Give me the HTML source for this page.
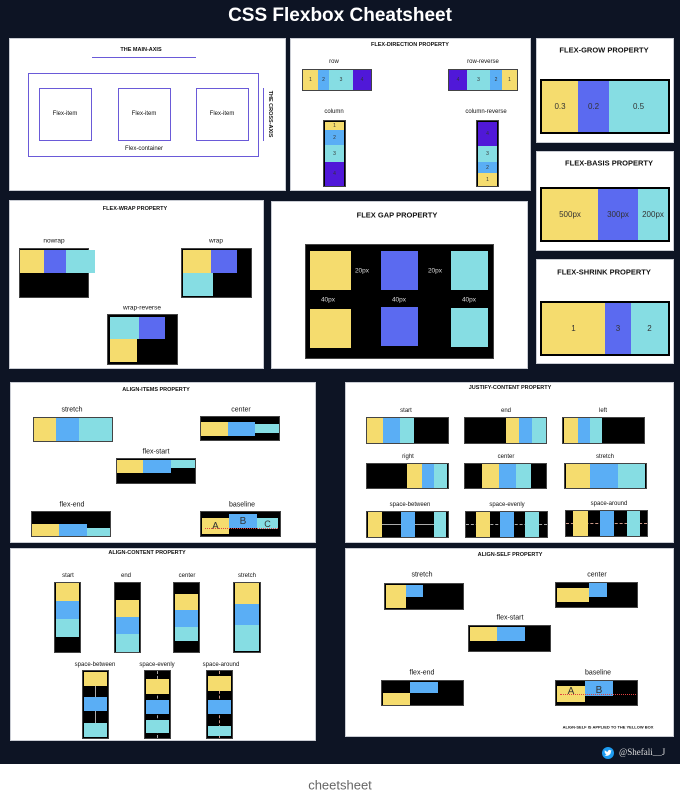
<!DOCTYPE html>
<html><head><meta charset="utf-8"><style>
*{margin:0;padding:0;box-sizing:border-box}
body{width:680px;height:795px;background:#fff;position:relative;overflow:hidden;font-family:"Liberation Sans",sans-serif}
.a{position:absolute}
.bg{left:0;top:0;width:680px;height:764px;background:#0d1424}
.p{position:absolute;background:#fff;border:1px solid #c9ccd3}
.k{position:absolute;background:#000;border:1px solid #444}
.t{position:absolute;transform:translate(-50%,-50%);white-space:nowrap;font-weight:bold;color:#111}
.s6{font-size:5.5px}.s7{font-size:7px;font-weight:normal}.s8{font-size:7.5px}
.Y{background:#f5dc6e}.B{background:#5b6af0}.L{background:#5aaef5}.C{background:#86dde3}.P{background:#5018d8}
.n{display:flex;align-items:center;justify-content:center;font-size:8px;color:#333}
</style></head><body>
<div class="a bg"></div>
<div class="t" style="left:340px;top:16px;color:#fff;font-size:19px">CSS Flexbox Cheatsheet</div>

<!-- Panel 1 -->
<div class="p" style="left:9px;top:38px;width:277px;height:153px"></div>
<div class="t s6" style="left:141px;top:50px">THE MAIN-AXIS</div>
<div class="a" style="left:92px;top:57px;width:104px;height:1px;background:#6a5ad8"></div>
<div class="a" style="left:28px;top:73px;width:231px;height:84px;border:1px solid #6a5ad8"></div>
<div class="a" style="left:39px;top:88px;width:53px;height:53px;border:1px solid #6a5ad8"></div>
<div class="a" style="left:118px;top:88px;width:53px;height:53px;border:1px solid #6a5ad8"></div>
<div class="a" style="left:196px;top:88px;width:53px;height:53px;border:1px solid #6a5ad8"></div>
<div class="t s7" style="left:65px;top:114px;font-size:6px">Flex-item</div>
<div class="t s7" style="left:144px;top:114px;font-size:6px">Flex-item</div>
<div class="t s7" style="left:222px;top:114px;font-size:6px">Flex-item</div>
<div class="t s7" style="left:144px;top:149px;font-size:6px">Flex-container</div>
<div class="a" style="left:263px;top:88px;width:1px;height:53px;background:#6a5ad8"></div>
<div class="t s6" style="left:270px;top:114px;transform:translate(-50%,-50%) rotate(90deg)">THE CROSS-AXIS</div>

<!-- Panel 2 -->
<div class="p" style="left:290px;top:38px;width:241px;height:153px"></div>
<div class="t s6" style="left:410px;top:45px">FLEX-DIRECTION PROPERTY</div>
<div class="t s7" style="left:334px;top:62px;font-size:6px">row</div>
<div class="k" style="left:302px;top:69px;width:70px;height:22px"></div>
<div class="a Y n" style="left:303px;top:70px;width:15px;height:20px;font-size:5px">1</div>
<div class="a L n" style="left:318px;top:70px;width:11px;height:20px;font-size:5px">2</div>
<div class="a C n" style="left:329px;top:70px;width:24px;height:20px;font-size:5px">3</div>
<div class="a P n" style="left:353px;top:70px;width:18px;height:20px;font-size:5px">4</div>
<div class="t s7" style="left:483px;top:62px;font-size:6px">row-reverse</div>
<div class="k" style="left:448px;top:69px;width:70px;height:22px"></div>
<div class="a P n" style="left:449px;top:70px;width:18px;height:20px;font-size:5px">4</div>
<div class="a C n" style="left:467px;top:70px;width:23px;height:20px;font-size:5px">3</div>
<div class="a L n" style="left:490px;top:70px;width:12px;height:20px;font-size:5px">2</div>
<div class="a Y n" style="left:502px;top:70px;width:15px;height:20px;font-size:5px">1</div>
<div class="t s7" style="left:334px;top:112px;font-size:6px">column</div>
<div class="k" style="left:323px;top:120px;width:23px;height:67px"></div>
<div class="a Y n" style="left:325px;top:122px;width:19px;height:8px;font-size:5px">1</div>
<div class="a L n" style="left:325px;top:130px;width:19px;height:15px;font-size:5px">2</div>
<div class="a C n" style="left:325px;top:145px;width:19px;height:17px;font-size:5px">3</div>
<div class="a P n" style="left:325px;top:162px;width:19px;height:24px;font-size:5px">4</div>
<div class="t s7" style="left:486px;top:112px;font-size:6px">column-reverse</div>
<div class="k" style="left:476px;top:120px;width:23px;height:67px"></div>
<div class="a P n" style="left:478px;top:122px;width:19px;height:24px;font-size:5px">4</div>
<div class="a C n" style="left:478px;top:146px;width:19px;height:16px;font-size:5px">3</div>
<div class="a L n" style="left:478px;top:162px;width:19px;height:11px;font-size:5px">2</div>
<div class="a Y n" style="left:478px;top:173px;width:19px;height:13px;font-size:5px">1</div>

<!-- Grow / basis / shrink -->
<div class="p" style="left:536px;top:38px;width:138px;height:105px"></div>
<div class="t s8" style="left:604px;top:50px">FLEX-GROW PROPERTY</div>
<div class="k" style="left:540px;top:79px;width:130px;height:55px;border:2px solid #000"></div>
<div class="a Y n" style="left:542px;top:81px;width:36px;height:51px">0.3</div>
<div class="a B n" style="left:578px;top:81px;width:31px;height:51px">0.2</div>
<div class="a C n" style="left:609px;top:81px;width:59px;height:51px">0.5</div>

<div class="p" style="left:536px;top:151px;width:138px;height:100px"></div>
<div class="t s8" style="left:609px;top:163px">FLEX-BASIS PROPERTY</div>
<div class="k" style="left:540px;top:187px;width:130px;height:55px;border:2px solid #000"></div>
<div class="a Y n" style="left:542px;top:189px;width:56px;height:51px">500px</div>
<div class="a B n" style="left:598px;top:189px;width:40px;height:51px">300px</div>
<div class="a C n" style="left:638px;top:189px;width:30px;height:51px">200px</div>

<div class="p" style="left:536px;top:259px;width:138px;height:105px"></div>
<div class="t s8" style="left:604px;top:272px">FLEX-SHRINK PROPERTY</div>
<div class="k" style="left:540px;top:301px;width:130px;height:55px;border:2px solid #000"></div>
<div class="a Y n" style="left:542px;top:303px;width:63px;height:51px">1</div>
<div class="a B n" style="left:605px;top:303px;width:26px;height:51px">3</div>
<div class="a C n" style="left:631px;top:303px;width:37px;height:51px">2</div>

<!-- Wrap -->
<div class="p" style="left:9px;top:200px;width:255px;height:169px"></div>
<div class="t s6" style="left:135px;top:209px">FLEX-WRAP PROPERTY</div>
<div class="t s7" style="left:54px;top:241px;font-size:6.5px">nowrap</div>
<div class="k" style="left:19px;top:248px;width:70px;height:50px"></div>
<div class="a Y" style="left:20px;top:250px;width:24px;height:23px"></div>
<div class="a B" style="left:44px;top:250px;width:22px;height:23px"></div>
<div class="a C" style="left:66px;top:250px;width:29px;height:23px"></div>
<div class="t s7" style="left:216px;top:241px;font-size:6.5px">wrap</div>
<div class="k" style="left:181px;top:248px;width:71px;height:50px"></div>
<div class="a Y" style="left:183px;top:250px;width:28px;height:23px"></div>
<div class="a B" style="left:211px;top:250px;width:26px;height:23px"></div>
<div class="a C" style="left:183px;top:273px;width:30px;height:23px"></div>
<div class="t s7" style="left:142px;top:308px;font-size:6.5px">wrap-reverse</div>
<div class="k" style="left:107px;top:314px;width:71px;height:51px"></div>
<div class="a C" style="left:110px;top:317px;width:29px;height:22px"></div>
<div class="a B" style="left:139px;top:317px;width:26px;height:22px"></div>
<div class="a Y" style="left:110px;top:339px;width:27px;height:23px"></div>

<!-- Gap -->
<div class="p" style="left:271px;top:201px;width:257px;height:168px"></div>
<div class="t s8" style="left:397px;top:215px">FLEX GAP PROPERTY</div>
<div class="k" style="left:305px;top:244px;width:189px;height:115px"></div>
<div class="a Y" style="left:310px;top:251px;width:41px;height:39px"></div>
<div class="a B" style="left:381px;top:251px;width:37px;height:39px"></div>
<div class="a C" style="left:451px;top:251px;width:37px;height:39px"></div>
<div class="a Y" style="left:310px;top:309px;width:41px;height:39px"></div>
<div class="a B" style="left:381px;top:307px;width:37px;height:39px"></div>
<div class="a C" style="left:451px;top:308px;width:37px;height:39px"></div>
<div class="t" style="left:362px;top:271px;font-size:6.5px;color:#ddd;font-weight:normal">20px</div>
<div class="t" style="left:435px;top:271px;font-size:6.5px;color:#ddd;font-weight:normal">20px</div>
<div class="t" style="left:328px;top:300px;font-size:6.5px;color:#ddd;font-weight:normal">40px</div>
<div class="t" style="left:399px;top:300px;font-size:6.5px;color:#ddd;font-weight:normal">40px</div>
<div class="t" style="left:469px;top:300px;font-size:6.5px;color:#ddd;font-weight:normal">40px</div>

<!-- Align-items -->
<div class="p" style="left:10px;top:382px;width:306px;height:161px"></div>
<div class="t s6" style="left:156px;top:390px">ALIGN-ITEMS PROPERTY</div>
<div class="t s7" style="left:72px;top:410px">stretch</div>
<div class="k" style="left:33px;top:417px;width:80px;height:25px"></div>
<div class="a Y" style="left:34px;top:418px;width:22px;height:23px"></div>
<div class="a L" style="left:56px;top:418px;width:23px;height:23px"></div>
<div class="a C" style="left:79px;top:418px;width:33px;height:23px"></div>
<div class="t s7" style="left:241px;top:410px">center</div>
<div class="k" style="left:200px;top:416px;width:80px;height:25px"></div>
<div class="a Y" style="left:201px;top:422px;width:27px;height:14px"></div>
<div class="a L" style="left:228px;top:422px;width:27px;height:14px"></div>
<div class="a C" style="left:255px;top:424px;width:24px;height:9px"></div>
<div class="t s7" style="left:156px;top:452px">flex-start</div>
<div class="k" style="left:116px;top:458px;width:80px;height:26px"></div>
<div class="a Y" style="left:117px;top:460px;width:26px;height:13px"></div>
<div class="a L" style="left:143px;top:460px;width:28px;height:13px"></div>
<div class="a C" style="left:171px;top:460px;width:24px;height:8px"></div>
<div class="t s7" style="left:72px;top:505px">flex-end</div>
<div class="k" style="left:31px;top:511px;width:80px;height:26px"></div>
<div class="a Y" style="left:32px;top:524px;width:27px;height:12px"></div>
<div class="a L" style="left:59px;top:524px;width:28px;height:12px"></div>
<div class="a C" style="left:87px;top:528px;width:23px;height:8px"></div>
<div class="t s7" style="left:242px;top:505px">baseline</div>
<div class="k" style="left:200px;top:511px;width:81px;height:26px"></div>
<div class="a Y n" style="left:202px;top:518px;width:27px;height:16px;font-size:10px">A</div>
<div class="a L n" style="left:229px;top:514px;width:28px;height:14px;font-size:10px">B</div>
<div class="a C n" style="left:257px;top:518px;width:21px;height:11px;font-size:9px">C</div>
<div class="a" style="left:205px;top:528px;width:73px;border-top:1px dotted #e04040"></div>

<!-- Justify-content -->
<div class="p" style="left:345px;top:382px;width:329px;height:161px"></div>
<div class="t s6" style="left:510px;top:388px">JUSTIFY-CONTENT PROPERTY</div>
<div class="t s7" style="left:406px;top:411px;font-size:6px">start</div>
<div class="t s7" style="left:506px;top:411px;font-size:6px">end</div>
<div class="t s7" style="left:603px;top:411px;font-size:6px">left</div>
<div class="k" style="left:366px;top:417px;width:83px;height:27px"></div>
<div class="a Y" style="left:367px;top:418px;width:16px;height:25px"></div><div class="a L" style="left:383px;top:418px;width:17px;height:25px"></div><div class="a C" style="left:400px;top:418px;width:14px;height:25px"></div>
<div class="k" style="left:464px;top:417px;width:83px;height:27px"></div>
<div class="a Y" style="left:506px;top:418px;width:13px;height:25px"></div><div class="a L" style="left:519px;top:418px;width:13px;height:25px"></div><div class="a C" style="left:532px;top:418px;width:14px;height:25px"></div>
<div class="k" style="left:562px;top:417px;width:83px;height:27px"></div>
<div class="a Y" style="left:564px;top:418px;width:14px;height:25px"></div><div class="a L" style="left:578px;top:418px;width:12px;height:25px"></div><div class="a C" style="left:590px;top:418px;width:12px;height:25px"></div>
<div class="t s7" style="left:408px;top:457px;font-size:6px">right</div>
<div class="t s7" style="left:506px;top:457px;font-size:6px">center</div>
<div class="t s7" style="left:605px;top:457px;font-size:6px">stretch</div>
<div class="k" style="left:366px;top:463px;width:83px;height:26px"></div>
<div class="a Y" style="left:407px;top:464px;width:15px;height:24px"></div><div class="a L" style="left:422px;top:464px;width:12px;height:24px"></div><div class="a C" style="left:434px;top:464px;width:13px;height:24px"></div>
<div class="k" style="left:464px;top:463px;width:83px;height:26px"></div>
<div class="a Y" style="left:482px;top:464px;width:17px;height:24px"></div><div class="a L" style="left:499px;top:464px;width:17px;height:24px"></div><div class="a C" style="left:516px;top:464px;width:15px;height:24px"></div>
<div class="k" style="left:564px;top:463px;width:83px;height:26px"></div>
<div class="a Y" style="left:566px;top:464px;width:24px;height:24px"></div><div class="a L" style="left:590px;top:464px;width:28px;height:24px"></div><div class="a C" style="left:618px;top:464px;width:27px;height:24px"></div>
<div class="t s7" style="left:410px;top:505px;font-size:6px">space-between</div>
<div class="t s7" style="left:507px;top:505px;font-size:6px">space-evenly</div>
<div class="t s7" style="left:609px;top:504px;font-size:6px">space-around</div>
<div class="k" style="left:366px;top:511px;width:83px;height:27px"></div>
<div class="a" style="left:382px;top:524px;width:52px;border-top:1px solid #aaa"></div>
<div class="a Y" style="left:368px;top:512px;width:14px;height:25px"></div><div class="a L" style="left:401px;top:512px;width:14px;height:25px"></div><div class="a C" style="left:434px;top:512px;width:12px;height:25px"></div>
<div class="k" style="left:465px;top:511px;width:83px;height:27px"></div>
<div class="a" style="left:466px;top:524px;width:81px;border-top:1px dashed #aaa"></div>
<div class="a Y" style="left:476px;top:512px;width:14px;height:25px"></div><div class="a L" style="left:500px;top:512px;width:14px;height:25px"></div><div class="a C" style="left:525px;top:512px;width:14px;height:25px"></div>
<div class="k" style="left:565px;top:510px;width:83px;height:27px"></div>
<div class="a" style="left:566px;top:523px;width:81px;border-top:1px dashed #c98"></div>
<div class="a Y" style="left:573px;top:511px;width:15px;height:25px"></div><div class="a L" style="left:600px;top:511px;width:14px;height:25px"></div><div class="a C" style="left:627px;top:511px;width:13px;height:25px"></div>

<!-- Align-content -->
<div class="p" style="left:10px;top:548px;width:306px;height:193px"></div>
<div class="t s6" style="left:147px;top:553px">ALIGN-CONTENT PROPERTY</div>
<div class="t s7" style="left:68px;top:576px;font-size:6px">start</div>
<div class="t s7" style="left:126px;top:576px;font-size:6px">end</div>
<div class="t s7" style="left:187px;top:576px;font-size:6px">center</div>
<div class="t s7" style="left:247px;top:576px;font-size:6px">stretch</div>
<div class="k" style="left:54px;top:582px;width:27px;height:71px"></div>
<div class="a Y" style="left:56px;top:583px;width:23px;height:18px"></div><div class="a L" style="left:56px;top:601px;width:23px;height:18px"></div><div class="a C" style="left:56px;top:619px;width:23px;height:18px"></div>
<div class="k" style="left:114px;top:582px;width:27px;height:71px"></div>
<div class="a Y" style="left:116px;top:600px;width:23px;height:17px"></div><div class="a L" style="left:116px;top:617px;width:23px;height:17px"></div><div class="a C" style="left:116px;top:634px;width:23px;height:18px"></div>
<div class="k" style="left:173px;top:582px;width:27px;height:71px"></div>
<div class="a Y" style="left:175px;top:594px;width:23px;height:16px"></div><div class="a L" style="left:175px;top:610px;width:23px;height:17px"></div><div class="a C" style="left:175px;top:627px;width:23px;height:14px"></div>
<div class="k" style="left:233px;top:582px;width:28px;height:71px"></div>
<div class="a Y" style="left:235px;top:583px;width:24px;height:21px"></div><div class="a L" style="left:235px;top:604px;width:24px;height:21px"></div><div class="a C" style="left:235px;top:625px;width:24px;height:26px"></div>
<div class="t s7" style="left:95px;top:665px;font-size:6px">space-between</div>
<div class="t s7" style="left:157px;top:665px;font-size:6px">space-evenly</div>
<div class="t s7" style="left:221px;top:665px;font-size:6px">space-around</div>
<div class="k" style="left:82px;top:670px;width:27px;height:69px"></div>
<div class="a" style="left:95px;top:672px;height:64px;border-left:1px solid #aaa"></div>
<div class="a Y" style="left:84px;top:672px;width:23px;height:14px"></div><div class="a L" style="left:84px;top:697px;width:23px;height:14px"></div><div class="a C" style="left:84px;top:723px;width:23px;height:14px"></div>
<div class="k" style="left:144px;top:670px;width:27px;height:69px"></div>
<div class="a" style="left:157px;top:671px;height:67px;border-left:1px dashed #aaa"></div>
<div class="a Y" style="left:146px;top:679px;width:23px;height:15px"></div><div class="a L" style="left:146px;top:700px;width:23px;height:14px"></div><div class="a C" style="left:146px;top:720px;width:23px;height:13px"></div>
<div class="k" style="left:206px;top:670px;width:27px;height:69px"></div>
<div class="a" style="left:219px;top:671px;height:67px;border-left:1px dashed #c98"></div>
<div class="a Y" style="left:208px;top:676px;width:23px;height:15px"></div><div class="a L" style="left:208px;top:700px;width:23px;height:14px"></div><div class="a C" style="left:208px;top:726px;width:23px;height:10px"></div>

<!-- Align-self -->
<div class="p" style="left:345px;top:548px;width:329px;height:189px"></div>
<div class="t s6" style="left:510px;top:555px">ALIGN-SELF PROPERTY</div>
<div class="t s7" style="left:422px;top:575px">stretch</div>
<div class="k" style="left:384px;top:583px;width:80px;height:27px"></div>
<div class="a Y" style="left:386px;top:585px;width:20px;height:23px"></div><div class="a L" style="left:406px;top:585px;width:17px;height:12px"></div>
<div class="t s7" style="left:597px;top:575px">center</div>
<div class="k" style="left:555px;top:582px;width:83px;height:26px"></div>
<div class="a Y" style="left:557px;top:588px;width:32px;height:14px"></div><div class="a L" style="left:589px;top:583px;width:18px;height:14px"></div>
<div class="t s7" style="left:510px;top:618px">flex-start</div>
<div class="k" style="left:468px;top:625px;width:83px;height:27px"></div>
<div class="a Y" style="left:470px;top:627px;width:27px;height:14px"></div><div class="a L" style="left:497px;top:627px;width:28px;height:14px"></div>
<div class="t s7" style="left:422px;top:673px">flex-end</div>
<div class="k" style="left:381px;top:680px;width:83px;height:26px"></div>
<div class="a Y" style="left:383px;top:693px;width:27px;height:12px"></div><div class="a L" style="left:410px;top:682px;width:28px;height:11px"></div>
<div class="t s7" style="left:598px;top:673px">baseline</div>
<div class="k" style="left:555px;top:680px;width:83px;height:26px"></div>
<div class="a Y n" style="left:557px;top:686px;width:28px;height:16px;font-size:10px;align-items:flex-start">A</div>
<div class="a L n" style="left:585px;top:681px;width:28px;height:15px;font-size:10px;align-items:flex-end">B</div>
<div class="a" style="left:560px;top:694px;width:76px;border-top:1px dotted #e04040"></div>
<div class="t" style="left:608px;top:727px;font-size:4px">ALIGN-SELF IS APPLIED TO THE YELLOW BOX</div>

<!-- Twitter -->
<div class="a" style="left:602px;top:747px;width:12px;height:12px;border-radius:50%;background:#1d9bf0"></div>
<svg class="a" style="left:604px;top:749px" width="8" height="8" viewBox="0 0 24 24"><path fill="#fff" d="M23 5c-.8.4-1.7.6-2.6.7.9-.6 1.6-1.4 2-2.5-.9.5-1.9.9-2.9 1.1A4.5 4.5 0 0 0 11.8 8.4 12.8 12.8 0 0 1 2.5 3.7a4.5 4.5 0 0 0 1.4 6c-.7 0-1.4-.2-2-.6 0 2.2 1.5 4 3.6 4.4-.7.2-1.4.2-2 .1.6 1.8 2.2 3.1 4.2 3.1A9 9 0 0 1 1 18.6 12.8 12.8 0 0 0 20.7 7.8V7.2C21.6 6.6 22.4 5.8 23 5z"/></svg>
<div class="a" style="left:619px;top:747px;font-size:9px;color:#ddd;font-family:'Liberation Serif',serif">@Shefali__J</div>

<div class="t" style="left:340px;top:785px;font-size:13px;font-weight:normal;color:#666">cheetsheet</div>
</body></html>
